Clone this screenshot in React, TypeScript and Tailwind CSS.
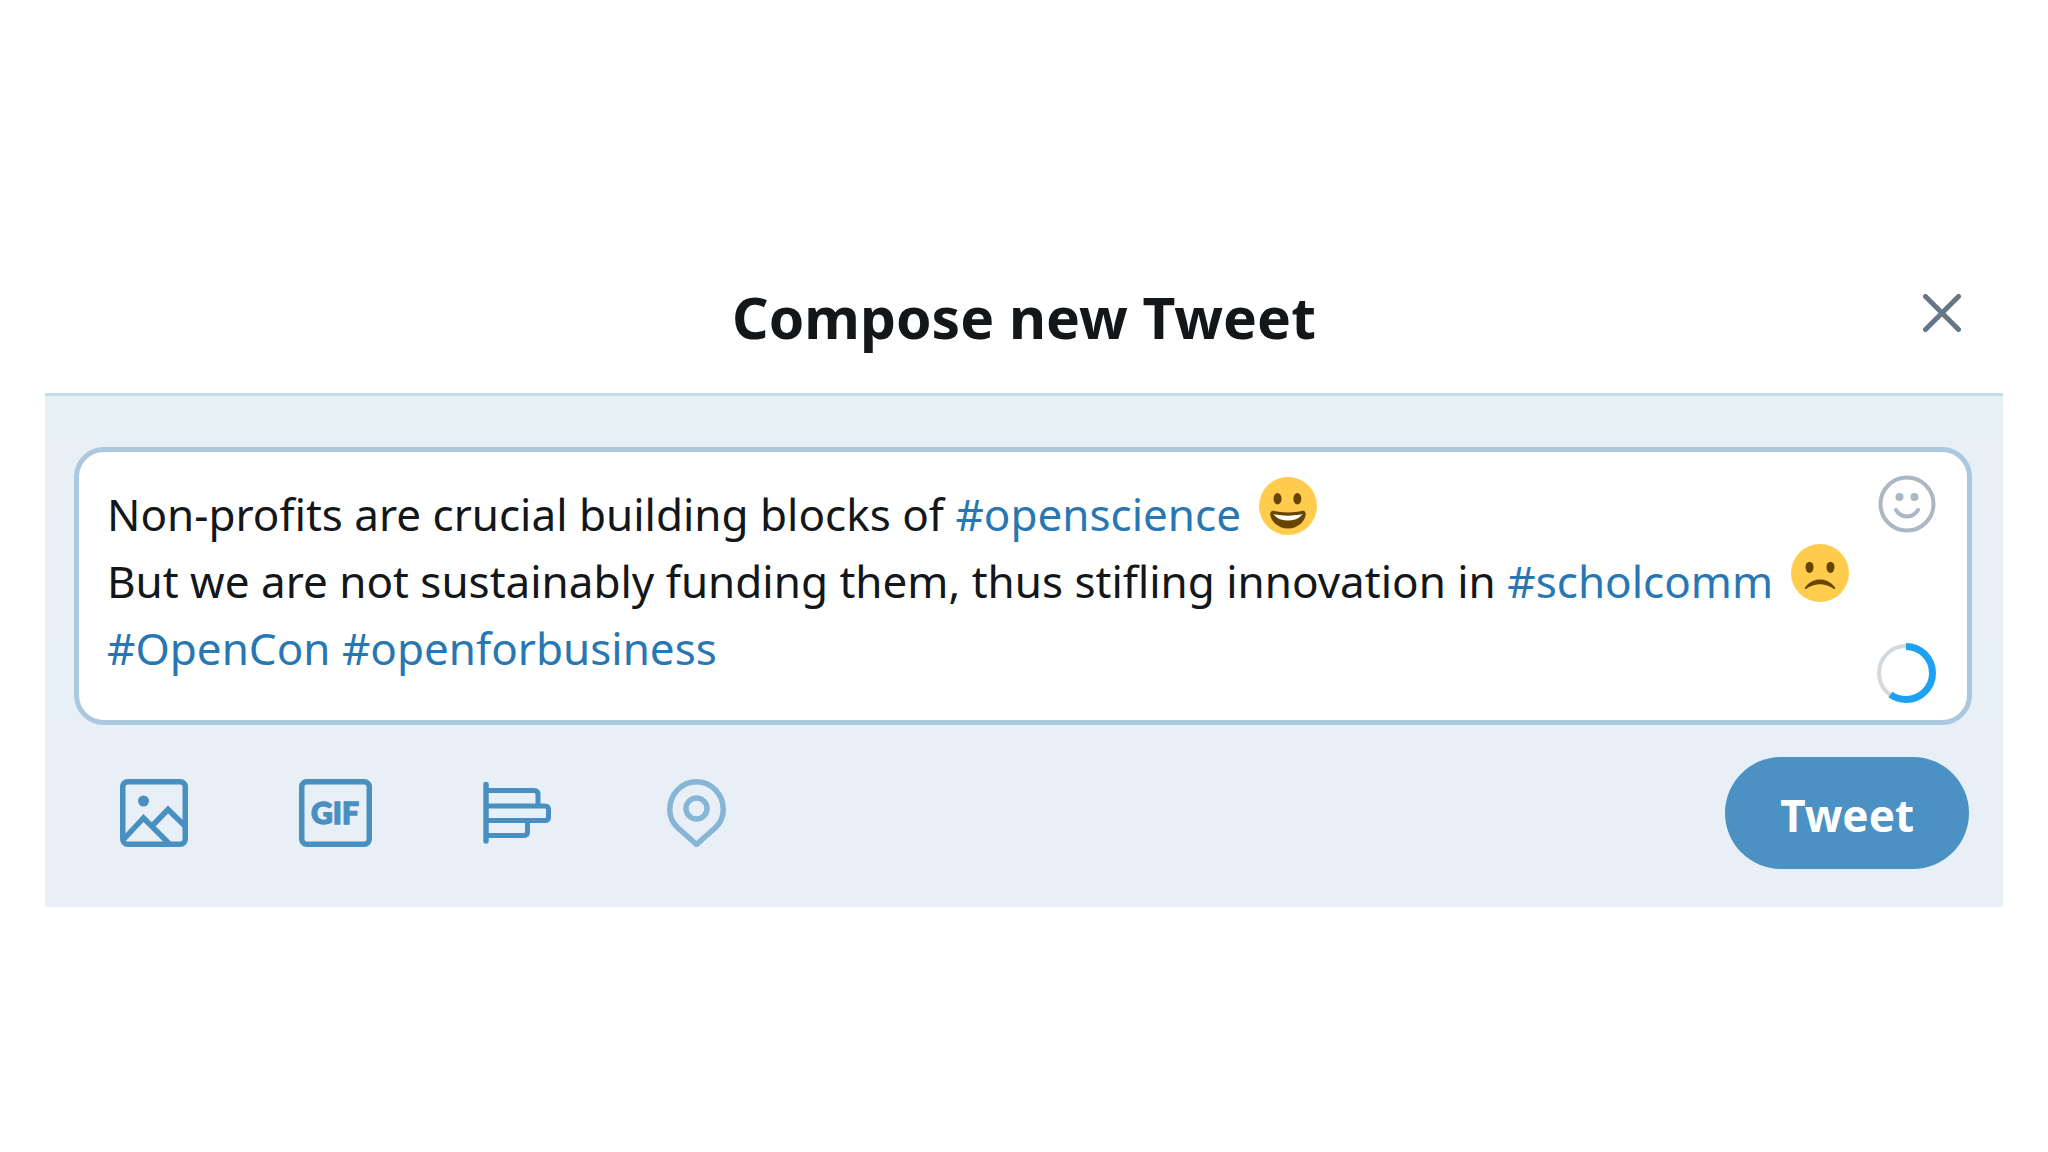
import React from "react";

const LINK = "text-[#2877b2]";
const EMOJI = "-mt-2 ml-4.5 inline-block size-[58px] align-[-4px]";

function GrinningEmoji() {
  return (
    <svg role="img" aria-label="Grinning face" viewBox="0 0 36 36" className={EMOJI}>
      <circle cx="18" cy="18" r="18" fill="#ffcc4d" />
      <ellipse cx="11.5" cy="13.5" rx="2.5" ry="3.5" fill="#664500" />
      <ellipse cx="23.8" cy="13.5" rx="2.5" ry="3.5" fill="#664500" />
      <path fill="#664500" d="M18 22c-3.623 0-6.027-.422-9-1-.679-.131-2 0-2 2 0 4 4.595 9 11 9 6.404 0 11-5 11-9 0-2-1.321-2.132-2-2-2.973.578-5.377 1-9 1z" />
      <path fill="#fff" d="M9 23s3 1 9 1 9-1 9-1-2 4-9 4-9-4-9-4z" />
    </svg>
  );
}

function FrowningEmoji() {
  return (
    <svg role="img" aria-label="Frowning face" viewBox="0 0 36 36" className={EMOJI}>
      <circle cx="18" cy="18" r="18" fill="#ffcc4d" />
      <ellipse cx="11.5" cy="14.5" rx="2.5" ry="3.5" fill="#664500" />
      <ellipse cx="24.5" cy="14.5" rx="2.5" ry="3.5" fill="#664500" />
      <path fill="#664500" d="M8.665 27.871c.178.161.444.171.635.029.039-.029 3.922-2.9 8.7-2.9 4.766 0 8.662 2.871 8.7 2.9.191.142.457.13.635-.029.177-.16.217-.424.094-.628C27.3 27.029 24.212 22 18 22s-9.301 5.028-9.429 5.243c-.123.205-.084.468.094.628z" />
    </svg>
  );
}

function SmileIcon() {
  return (
    <svg viewBox="0 0 58 58" className="size-[58px]" fill="none" stroke="#abb7c4" strokeWidth="4" aria-hidden="true">
      <circle cx="29" cy="29" r="26.5" />
      <circle cx="21.5" cy="22" r="4" fill="#abb7c4" stroke="none" />
      <circle cx="36.5" cy="22" r="4" fill="#abb7c4" stroke="none" />
      <path d="M18 35c5 8.5 17 8.5 22 0" strokeLinecap="round" />
    </svg>
  );
}

function CharacterCount() {
  return (
    <svg role="img" aria-label="Characters used" viewBox="0 0 60 60" className="size-[60px]" fill="none">
      <circle cx="29" cy="30" r="27" stroke="#d3d9dd" strokeWidth="4" />
      <circle cx="29" cy="30" r="26.5" stroke="#1da1f2" strokeWidth="7" pathLength="100" strokeDasharray="60 100" transform="rotate(-90 29 30)" />
    </svg>
  );
}

function ImageIcon() {
  return (
    <svg viewBox="0 0 68 68" className="h-[68px] w-[68px]" fill="none" stroke="#4990c2" strokeWidth="5.5" aria-hidden="true">
      <rect x="2.75" y="2.75" width="62.5" height="62.5" rx="5" />
      <circle cx="23.5" cy="22" r="5.5" fill="#4990c2" stroke="none" />
      <path d="M3 61 L23.5 39 L50.5 66 M33.5 45.5 L48 30.5 L65 47" />
    </svg>
  );
}

function GifIcon() {
  return (
    <svg viewBox="0 0 73 68" className="h-[68px] w-[73px]" aria-hidden="true">
      <rect x="2.75" y="2.75" width="67.5" height="62.5" rx="5" fill="none" stroke="#4990c2" strokeWidth="5.5" />
      <text x="36" y="44.5" textAnchor="middle" fill="#4990c2" stroke="#4990c2" strokeWidth="1.4" fontSize="30" fontWeight="900" fontFamily="Lato, sans-serif">
        GIF
      </text>
    </svg>
  );
}

function PollIcon() {
  return (
    <svg viewBox="0 0 68 68" className="h-[68px] w-[68px]" fill="none" stroke="#4990c2" strokeWidth="5" strokeLinejoin="round" aria-hidden="true">
      <path d="M3 5.5V62" strokeWidth="5.5" strokeLinecap="round" />
      <path d="M3 11.5H51q4 0 4 4V27 M3 27H62q3.5 0 3.5 3.5V38q0 3.5-3.5 3.5H3 M44.5 41.5V53q0 3.5-4 3.5H3" />
    </svg>
  );
}

function LocationIcon() {
  return (
    <svg viewBox="0 0 70 68" className="h-[68px] w-[70px]" fill="none" stroke="#86b5d5" strokeWidth="5.5" strokeLinejoin="round" aria-hidden="true">
      <path d="M34.5 65.5L16 49C10.5 44 7.75 38 7.75 30.5a26.75 27.75 0 0 1 53.5 0c0 7.5-2.75 13.5-8.25 18.5z" />
      <circle cx="34.5" cy="29.5" r="10.5" />
    </svg>
  );
}

const tools = [
  { label: "Add photos", Icon: ImageIcon },
  { label: "Add a GIF", Icon: GifIcon },
  { label: "Add poll", Icon: PollIcon },
  { label: "Add location", Icon: LocationIcon },
];

export default function App() {
  return (
    <main className="min-h-screen bg-white px-[45px] pt-[270px] font-['Noto_Sans','Open_Sans',sans-serif] text-[#14171a]">
      <section role="dialog" aria-labelledby="compose-title">
        <header className="grid grid-cols-[1fr_auto_1fr] items-start pb-[29px]">
          <h1 id="compose-title" className="col-start-2 text-[57px] leading-[94px] font-bold">
            Compose new Tweet
          </h1>
          <button type="button" aria-label="Close" className="mt-6 mr-[42px] justify-self-end">
            <svg viewBox="0 0 38 38" className="size-[38px]" stroke="#657786" strokeWidth="5" strokeLinecap="round" aria-hidden="true">
              <path d="M2.5 2.5l33 33M35.5 2.5l-33 33" />
            </svg>
          </button>
        </header>

        <form className="border-t-[3px] border-[#c5dfea] bg-[#e8f0f6] bg-linear-to-b from-[#e6f1f4] via-[#e8f0f6] via-10% to-[#e8eff7] pt-[51px] pr-[31px] pb-[38px] pl-[29px]" onSubmit={(e) => e.preventDefault()}>
          <div className="flex rounded-[30px] border-[5px] border-[#abc8df] bg-white pt-[23px] pr-[30px] pb-[17px] pl-7">
            <div
              role="textbox"
              aria-multiline="true"
              aria-label="Tweet text"
              contentEditable
              suppressContentEditableWarning
              spellCheck={false}
              className="flex-1 pt-[6px] pb-[21px] text-[44px] leading-[67px] outline-none"
            >
              <div>
                Non-profits are crucial building blocks of <a href="#openscience" className={LINK}>#openscience</a>
                <GrinningEmoji />
              </div>
              <div>
                But we are not sustainably funding them, thus stifling innovation in <a href="#scholcomm" className={LINK}>#scholcomm</a>
                <FrowningEmoji />
              </div>
              <div>
                <a href="#OpenCon" className={LINK}>#OpenCon</a> <a href="#openforbusiness" className={LINK}>#openforbusiness</a>
              </div>
            </div>
            <div className="flex flex-col items-center justify-between">
              <button type="button" aria-label="Add emoji">
                <SmileIcon />
              </button>
              <CharacterCount />
            </div>
          </div>

          <div className="mt-8 flex items-center justify-between pr-[3px] pl-[46px]">
            <div className="flex gap-[111px]">
              {tools.map(({ label, Icon }) => (
                <button key={label} type="button" aria-label={label}>
                  <Icon />
                </button>
              ))}
            </div>
            <button type="submit" className="h-28 rounded-full bg-[#4c91c4] px-[55px] pt-1 text-[44px] font-bold text-white">
              Tweet
            </button>
          </div>
        </form>
      </section>
    </main>
  );
}
